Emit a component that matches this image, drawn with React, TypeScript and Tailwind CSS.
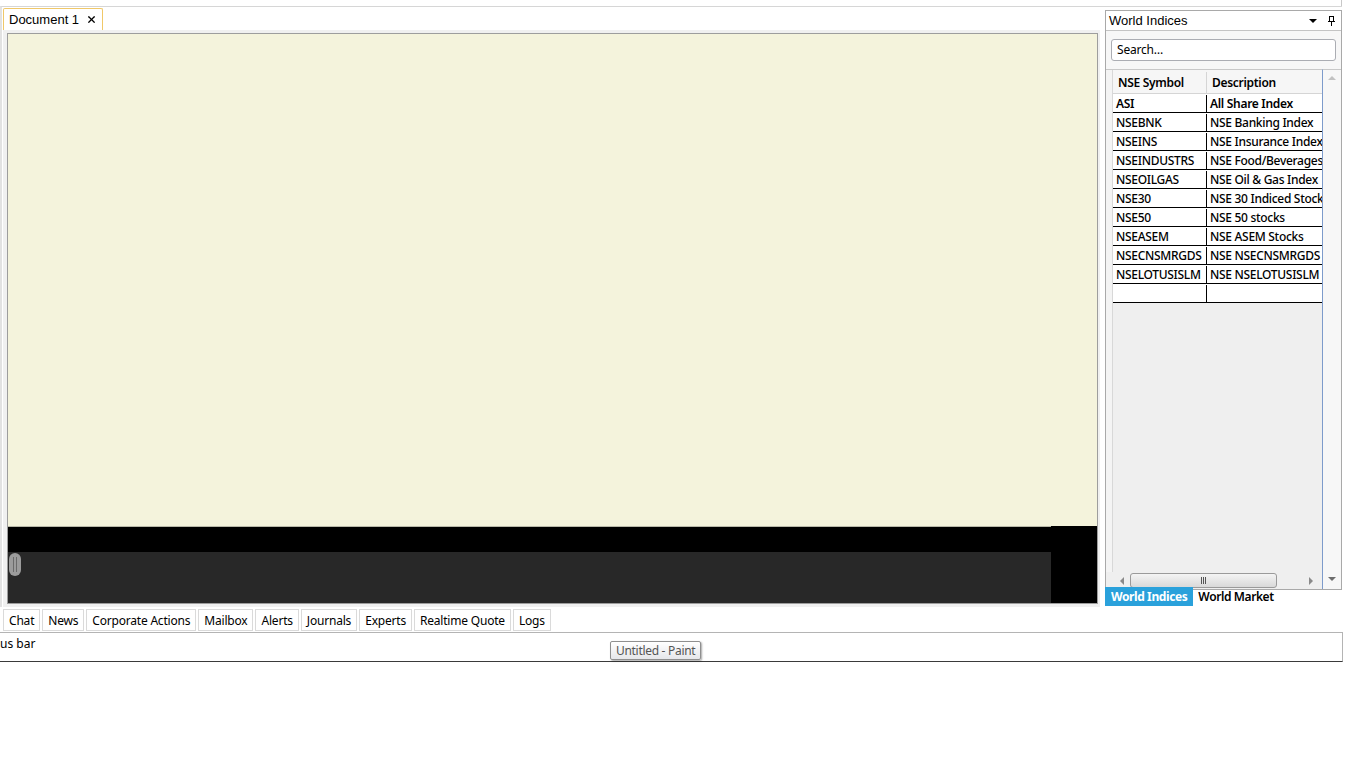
import { X } from "lucide-react";

const indices = [
  { symbol: "ASI", description: "All Share Index", active: true },
  { symbol: "NSEBNK", description: "NSE Banking Index" },
  { symbol: "NSEINS", description: "NSE Insurance Index" },
  { symbol: "NSEINDUSTRS", description: "NSE Food/Beverages" },
  { symbol: "NSEOILGAS", description: "NSE Oil & Gas Index" },
  { symbol: "NSE30", description: "NSE 30 Indiced Stocks" },
  { symbol: "NSE50", description: "NSE 50 stocks" },
  { symbol: "NSEASEM", description: "NSE ASEM Stocks" },
  { symbol: "NSECNSMRGDS", description: "NSE NSECNSMRGDS" },
  { symbol: "NSELOTUSISLM", description: "NSE NSELOTUSISLM" },
  { symbol: "", description: "" },
];

const bottomTabs = [
  "Chat",
  "News",
  "Corporate Actions",
  "Mailbox",
  "Alerts",
  "Journals",
  "Experts",
  "Realtime Quote",
  "Logs",
];

const ui = { fontFamily: '"Noto Sans", "Open Sans", sans-serif' };

function Triangle({ dir, className }: { dir: "up" | "down" | "left" | "right"; className?: string }) {
  const points = {
    up: "0,4 4,0 8,4",
    down: "0,0 8,0 4,4",
    left: "4,0 4,8 0,4",
    right: "0,0 0,8 4,4",
  }[dir];
  const vertical = dir === "up" || dir === "down";
  return (
    <svg width={vertical ? 8 : 4} height={vertical ? 4 : 8} viewBox={vertical ? "0 0 8 4" : "0 0 4 8"} className={className}>
      <polygon points={points} fill="currentColor" />
    </svg>
  );
}

function IndicesPanel() {
  return (
    <div className="flex flex-col">
      <div className="flex h-[580px] w-[237px] flex-col border border-[#a9a9a9] bg-[#f7f7f7]">
        {/* title bar */}
        <div className="flex h-[20px] items-center justify-between border-b border-[#c4c4c4] bg-white pl-[3px] pr-[6px]">
          <span className="text-[13px] leading-none text-black" style={{ fontFamily: '"Liberation Sans", sans-serif' }}>
            World Indices
          </span>
          <div className="flex items-center gap-[11px]">
            <Triangle dir="down" className="text-black" />
            <svg width="7" height="10" viewBox="0 0 7 10">
              <rect x="1.5" y="0.5" width="4" height="5" fill="none" stroke="#000" />
              <rect x="0" y="5" width="7" height="1" fill="#000" />
              <rect x="3" y="6" width="1" height="4" fill="#000" />
            </svg>
          </div>
        </div>

        {/* search */}
        <div className="px-[5px] pt-[8px] pb-[8px]">
          <div className="flex h-[22px] items-center rounded-[3px] border border-[#abadb3] bg-white px-[5px] text-[12px] tracking-[-0.2px] text-black">
            Search…
          </div>
        </div>

        {/* grid */}
        <div className="flex min-h-0 flex-1">
          <div className="flex w-[217px] flex-col border-t border-r border-[#c8c8c8] border-r-[#7d9bcb] bg-[#efefef]">
            <div className="flex min-h-0 flex-1">
              <div className="w-[7px] border-r border-[#d8d8d8] bg-[#f4f4f4]" />
              <div className="flex min-w-0 flex-1 flex-col overflow-hidden">
                <div className="flex h-[24px] border-b border-[#d5d5d5] bg-[#f6f6f6] pt-[2px] text-[12px] font-semibold tracking-[-0.3px]">
                  <div className="flex w-[94px] shrink-0 items-center border-r border-[#d5d5d5] pl-[5px]">NSE Symbol</div>
                  <div className="flex items-center pl-[5px] whitespace-nowrap">Description</div>
                </div>
                {indices.map((row, i) => (
                  <div
                    key={i}
                    className={`flex h-[19px] shrink-0 border-b border-black bg-white pt-px text-[12px] leading-[18px] tracking-[-0.3px] text-black ${
                      row.active ? "font-semibold" : "font-medium"
                    }`}
                  >
                    <div className="w-[94px] shrink-0 overflow-hidden border-r border-black pl-[3px] whitespace-nowrap">
                      {row.symbol}
                    </div>
                    <div className="pl-[3px] whitespace-nowrap">{row.description}</div>
                  </div>
                ))}
              </div>
            </div>
            {/* horizontal scrollbar */}
            <div className="flex h-[17px] items-center bg-[#efefef] pl-[14px] pr-[9px] text-[#8a8a8a]">
              <Triangle dir="left" />
              <div className="ml-[6px] flex h-[15px] w-[147px] items-center justify-center rounded-[3px] border border-[#9a9a9a] bg-gradient-to-b from-[#f4f4f4] to-[#d9d9d9]">
                <span className="flex gap-[1px]">
                  <span className="h-[7px] w-px bg-[#555]" />
                  <span className="h-[7px] w-px bg-[#555]" />
                  <span className="h-[7px] w-px bg-[#555]" />
                </span>
              </div>
              <div className="flex-1" />
              <Triangle dir="right" />
            </div>
          </div>
          {/* vertical scrollbar */}
          <div className="flex w-[18px] flex-col items-center justify-between border-t border-[#c8c8c8] bg-[#f7f7f7] pt-[6px] pb-[8px]">
            <Triangle dir="up" className="text-[#c2c2c2]" />
            <Triangle dir="down" className="text-[#6d6d6d]" />
          </div>
        </div>
      </div>

      <div className="-mt-[3px] flex h-[19px] items-center text-[12px] font-bold tracking-[-0.4px]">
        <div className="flex h-full items-center bg-[#2aa1db] px-[6px] text-white">World Indices</div>
        <div className="pl-[5px] font-semibold text-black">World Market</div>
      </div>
    </div>
  );
}

function DocumentArea() {
  return (
    <div className="flex flex-col">
      <div className="pl-[1px] pt-[1px]">
        <div className="flex h-[22px] w-[100px] items-center justify-between rounded-t-[2px] border border-b-0 border-[#f0c869] bg-white pl-[5px] pr-[5px]">
          <span className="text-[13px] text-black" style={{ fontFamily: '"Liberation Sans", sans-serif' }}>
            Document 1
          </span>
          <X size={11} strokeWidth={2.6} className="text-black" />
        </div>
      </div>
      <div className="ml-[1px] w-[1097px] bg-[#f0f0f0] pt-[3px] pl-[4px] pb-[3px]">
        <div className="flex h-[571px] w-[1091px] flex-col border border-[#9d9d9d] bg-black">
          <div className="h-[492px] bg-[#f4f3dc]" />
          <div className="h-px w-[1043px] bg-[#b8b8a8]" />
          <div className="h-[25px]" />
          <div className="flex h-[51px]">
            <div className="relative w-[1043px] bg-[#282828]">
              <div className="absolute top-[1px] left-[1px] flex h-[23px] w-[12px] items-center justify-center gap-[2px] rounded-full bg-[#9b9b9b]">
                <span className="h-[15px] w-px bg-[#6a6a6a]" />
                <span className="h-[15px] w-px bg-[#6a6a6a]" />
              </div>
            </div>
          </div>
        </div>
      </div>
    </div>
  );
}

export default function App() {
  return (
    <div className="relative h-[768px] w-[1366px] overflow-hidden bg-white text-black" style={ui}>
      <div className="h-[6px] w-[1342px] border-r border-[#c8c8c8]" />
      <div className="flex w-[1342px] border-t border-l-2 border-[#d6d6d6] border-l-[#e2e2e2]">
        <DocumentArea />
        <div className="ml-[5px] pt-[3px]">
          <IndicesPanel />
        </div>
      </div>

      {/* output tabs */}
      <div className="flex gap-[2px] pl-[3px] pt-[2px]">
        {bottomTabs.map((t) => (
          <div
            key={t}
            className="flex h-[22px] items-center border border-[#dadada] bg-white px-[5px] pt-px text-[12px] tracking-[-0.2px] text-black"
          >
            {t}
          </div>
        ))}
      </div>

      {/* status bar */}
      <div className="mt-px h-[30px] w-[1343px] border-t border-r border-[#b4b4b4] border-b border-b-[#3a3a3a] text-[12px] text-black">
        <div className="pt-[2px]">us bar</div>
      </div>

      <div className="absolute top-[641px] left-[610px] flex h-[19px] items-center rounded-[2px] border border-[#8f8f8f] bg-gradient-to-b from-white to-[#e6e7ea] px-[5px] text-[12px] tracking-[-0.3px] text-[#555] shadow-[1px_1px_2px_rgba(0,0,0,0.35)]">
        Untitled - Paint
      </div>
    </div>
  );
}
